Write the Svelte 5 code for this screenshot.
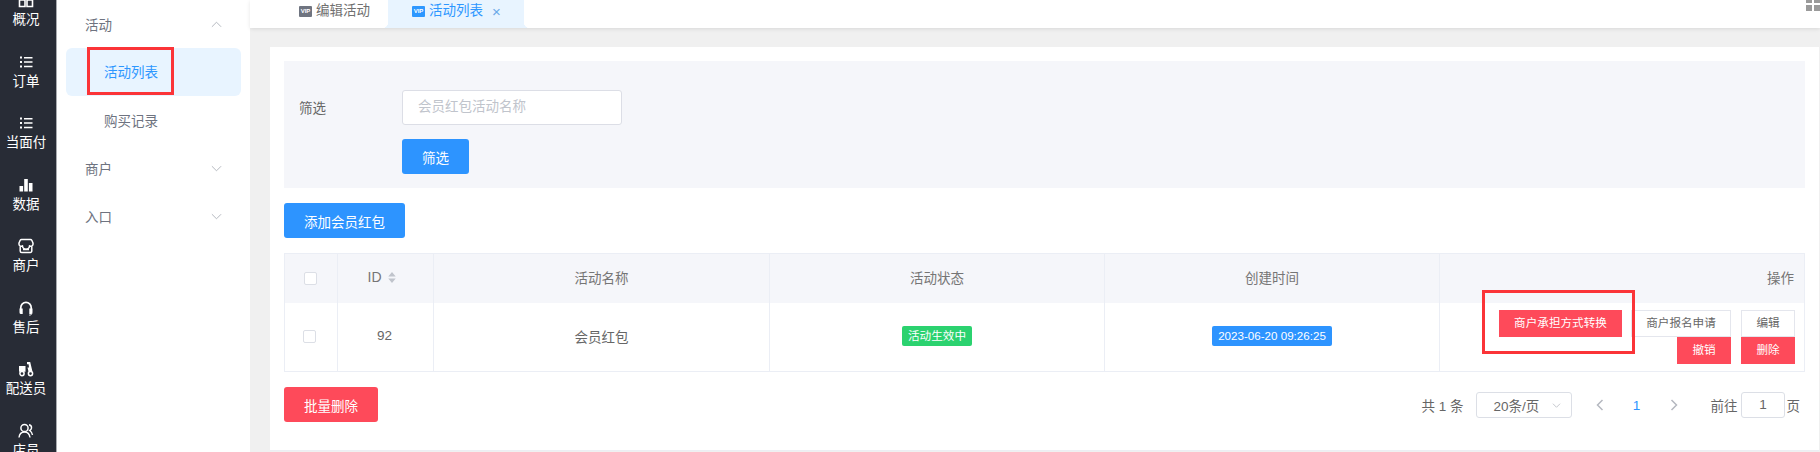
<script>
  const nav = [
    { label: '概况', icon: 'overview' },
    { label: '订单', icon: 'list' },
    { label: '当面付', icon: 'list' },
    { label: '数据', icon: 'bars' },
    { label: '商户', icon: 'store' },
    { label: '售后', icon: 'headset' },
    { label: '配送员', icon: 'scooter' },
    { label: '店员', icon: 'people' }
  ];
</script>

<div class="page">
  <aside class="rail">
    <nav class="rail-nav">
      {#each nav as item}
        <div class="rail-item">
          <svg class="rail-icon" viewBox="0 0 16 16" aria-hidden="true">
            {#if item.icon === 'overview'}
              <path d="M5 1.500h6v5H5z M1.500 8h5.500v6.500H1.500z M9 8h5.500v6.500H9z" fill="none" stroke="#fff" stroke-width="1.600" />
            {:else if item.icon === 'list'}
              <path d="M2 2.500h2v2H2z M2 7h2v2H2z M2 11.500h2v2H2z M6 3h8.500v1.400H6z M6 7.300h8.500v1.400H6z M6 11.800h8.500v1.400H6z" fill="#fff" />
            {:else if item.icon === 'bars'}
              <path d="M1.500 9h3.600v5.500H1.500z M6.200 2h3.600v12.500H6.200z M10.900 6h3.600v8.500h-3.600z" fill="#fff" />
            {:else if item.icon === 'store'}
              <path d="M3.500 1.500h9a1.500 1.500 0 0 1 1.300.8l1.200 2.700v1.200a2.100 2.100 0 0 1-3.500 1.500 2.800 2.800 0 0 1-7 0A2.100 2.100 0 0 1 1 6.200V5l1.200-2.700a1.500 1.500 0 0 1 1.300-.8z" fill="none" stroke="#fff" stroke-width="1.500" stroke-linejoin="round" />
              <path d="M2.200 8.500v4.500a1.500 1.500 0 0 0 1.500 1.500h8.600a1.500 1.500 0 0 0 1.500-1.500V8.500 M5 11.500h6" fill="none" stroke="#fff" stroke-width="1.500" />
            {:else if item.icon === 'headset'}
              <path d="M2.800 9V7.500a5.200 5.200 0 0 1 10.400 0V9" fill="none" stroke="#fff" stroke-width="1.700" />
              <path d="M1.500 8.500h3.200v5.500H3a1.500 1.500 0 0 1-1.500-1.500zM11.300 8.500h3.200v4A1.500 1.500 0 0 1 13 14h-1.700z" fill="#fff" />
              <path d="M13.800 13.500c0 1-1 1.600-2.600 1.600" fill="none" stroke="#fff" stroke-width="1" />
            {:else if item.icon === 'scooter'}
              <path d="M1 5h6.500v5.800H1z M9 1h3.200l2.300 9.800h-4l-1-4.300h1.500l-.4-3.200H9z" fill="#fff" />
              <circle cx="4" cy="12.600" r="2.100" fill="#282c36" stroke="#fff" stroke-width="1.500" />
              <circle cx="12.500" cy="12.600" r="2.100" fill="#282c36" stroke="#fff" stroke-width="1.500" />
            {:else}
              <circle cx="6.500" cy="5" r="3.600" fill="none" stroke="#fff" stroke-width="1.500" />
              <path d="M1 14.500c.4-3.500 2.600-5.500 5.500-5.500s5 2 5.500 5.500 M11 1.800c1.800.4 2.800 1.700 2.500 3.400-.2 1.100-.9 1.900-1.800 2.300 1.500 1 2.500 2.500 2.800 4.500" fill="none" stroke="#fff" stroke-width="1.400" />
            {/if}
          </svg>
          <span>{item.label}</span>
        </div>
      {/each}
    </nav>
  </aside>

  <aside class="menu">
    <div class="menu-group">
      <span>活动</span>
      <svg class="chev" viewBox="0 0 12 7"><path d="M1 6l5-5 5 5" /></svg>
    </div>
    <div class="menu-sub active">
      <span>活动列表</span>
      <i class="mark"></i>
    </div>
    <div class="menu-sub">购买记录</div>
    <div class="menu-group">
      <span>商户</span>
      <svg class="chev" viewBox="0 0 12 7"><path d="M1 1l5 5 5-5" /></svg>
    </div>
    <div class="menu-group">
      <span>入口</span>
      <svg class="chev" viewBox="0 0 12 7"><path d="M1 1l5 5 5-5" /></svg>
    </div>
  </aside>

  <main class="main">
    <header class="tabs">
      <div class="tab">
        <span class="vip">VIP</span>
        <span>编辑活动</span>
      </div>
      <div class="tab current">
        <span class="vip">VIP</span>
        <span>活动列表</span>
        <span class="close">×</span>
      </div>
      <div class="grid-icon"><i></i><i></i><i></i><i></i></div>
    </header>

    <section class="card">
      <div class="filter">
        <div class="filter-row">
          <span class="filter-label">筛选</span>
          <div class="fake-input">会员红包活动名称</div>
        </div>
        <button class="btn primary filter-btn">筛选</button>
      </div>

      <button class="btn primary add-btn">添加会员红包</button>

      <table class="table">
        <colgroup>
          <col class="c1" /><col class="c2" /><col class="c3" /><col class="c4" /><col class="c5" /><col class="c6" />
        </colgroup>
        <thead>
          <tr>
            <th><span class="check head-check"></span></th>
            <th>
              <span class="id-head">ID
                <svg viewBox="0 0 10 14" class="sort"><path d="M5 1l4 5H1z M5 13L1 8h8z" /></svg>
              </span>
            </th>
            <th>活动名称</th>
            <th>活动状态</th>
            <th>创建时间</th>
            <th class="right">操作</th>
          </tr>
        </thead>
        <tbody>
          <tr>
            <td><span class="check"></span></td>
            <td class="id">92</td>
            <td>会员红包</td>
            <td><span class="tag green">活动生效中</span></td>
            <td><span class="tag blue">2023-06-20 09:26:25</span></td>
            <td class="ops">
              <div class="ops-grid">
                <div class="ops-row">
                  <span class="mini red wide">商户承担方式转换<i class="mark big"></i></span>
                  <span class="mini plain apply">商户报名申请</span>
                  <span class="mini plain">编辑</span>
                </div>
                <div class="ops-row">
                  <span class="mini red">撤销</span>
                  <span class="mini red">删除</span>
                </div>
              </div>
            </td>
          </tr>
        </tbody>
      </table>

      <div class="footer">
        <button class="btn danger">批量删除</button>
        <div class="pager">
          <span class="total">共 1 条</span>
          <div class="size">
            <span>20条/页</span>
            <svg class="chev small" viewBox="0 0 12 7"><path d="M1 1l5 5 5-5" /></svg>
          </div>
          <svg class="arrow prev" viewBox="0 0 8 12"><path d="M6.500 1L1.500 6l5 5" /></svg>
          <span class="num">1</span>
          <svg class="arrow next" viewBox="0 0 8 12"><path d="M1.500 1l5 5-5 5" /></svg>
          <span class="goto">前往</span>
          <div class="page-input">1</div>
          <span class="unit">页</span>
        </div>
      </div>
    </section>
  </main>
</div>

<style>
  :global(body) {
    margin: 0;
  }
  .page {
    display: flex;
    width: 1820px;
    height: 452px;
    overflow: hidden;
    font-family: "Liberation Sans", "Noto Sans CJK SC", sans-serif;
    font-size: 13.5px;
    color: #666;
    background: #f0f0f0;
  }
  .rail {
    flex: none;
    width: 56px;
    background: #282c36;
    border-right: 1px solid #a9abb0;
    box-sizing: content-box;
  }
  .rail-nav {
    margin-top: -20px;
    padding-right: 4px;
  }
  .rail-item {
    height: 61.500px;
    box-sizing: border-box;
    padding-top: 12px;
    display: flex;
    flex-direction: column;
    align-items: center;
    color: #fff;
    font-size: 13.500px;
    line-height: 18px;
    white-space: nowrap;
  }
  .rail-icon {
    width: 16px;
    height: 16px;
    margin-bottom: 3px;
    flex: none;
  }
  .menu {
    flex: none;
    width: 193px;
    background: #fff;
    padding: 1px 9px 0;
    box-sizing: border-box;
    color: #6e7380;
  }
  .menu-group {
    height: 48px;
    box-sizing: border-box;
    display: flex;
    align-items: center;
    justify-content: space-between;
    padding: 0 19px 2px 19px;
  }
  .menu-sub {
    height: 48px;
    box-sizing: border-box;
    display: flex;
    align-items: center;
    padding: 0 0 2px 38px;
    position: relative;
  }
  .menu-group + .menu-sub {
    margin-top: -1px;
    margin-bottom: 1px;
  }
  .menu-sub.active {
    background: #e8f4ff;
    color: #2d97ff;
    border-radius: 6px;
  }
  .mark {
    position: absolute;
    border: 3px solid #fb3438;
    box-sizing: border-box;
    pointer-events: none;
  }
  .menu-sub .mark {
    left: 21px;
    top: -1px;
    width: 87px;
    height: 48px;
  }
  .chev {
    width: 11px;
    height: 7px;
    fill: none;
    stroke: #aeb2ba;
    stroke-width: 1;
  }
  .main {
    flex: 1;
    min-width: 0;
    display: flex;
    flex-direction: column;
  }
  .tabs {
    height: 28px;
    flex: none;
    background: #fff;
    box-shadow: 0 1px 4px rgba(0, 0, 0, 0.1);
    display: flex;
    align-items: stretch;
    padding-left: 49px;
    position: relative;
    line-height: 20px;
  }
  .tab {
    display: flex;
    align-items: flex-start;
    padding-top: 1px;
    gap: 4px;
    color: #707070;
    width: 89px;
    white-space: nowrap;
  }
  .tab .vip {
    margin-top: 5px;
  }
  .tab.current {
    width: 136px;
    box-sizing: border-box;
    padding-left: 24px;
    background: #e8f4ff;
    color: #2d97ff;
    position: relative;
  }
  .tab.current::before,
  .tab.current::after {
    content: "";
    position: absolute;
    bottom: 0;
    width: 6px;
    height: 6px;
  }
  .tab.current::before {
    left: -6px;
    background: radial-gradient(circle at 0 0, transparent 6px, #e8f4ff 6.500px);
  }
  .tab.current::after {
    right: -6px;
    background: radial-gradient(circle at 100% 0, transparent 6px, #e8f4ff 6.500px);
  }
  .vip {
    display: inline-block;
    width: 13px;
    height: 11px;
    background: #6f7480;
    color: #fff;
    font-size: 6px;
    line-height: 11px;
    font-weight: 700;
    text-align: center;
    border-radius: 1px;
    overflow: hidden;
  }
  .current .vip {
    background: #2d97ff;
  }
  .close {
    font-size: 15px;
    margin-left: 5px;
    color: #6aa9e8;
    line-height: 22px;
  }
  .grid-icon {
    position: absolute;
    right: 0;
    top: -3px;
    display: grid;
    grid-template-columns: 6px 6px;
    gap: 2px;
  }
  .grid-icon i {
    height: 6px;
    background: #9a9a9a;
  }
  .card {
    margin: 19px 1px 0 20px;
    height: 404px;
    flex: none;
    background: #fff;
    padding: 14px;
    box-sizing: border-box;
    border-bottom: 1px solid #eceef3;
    display: flex;
    flex-direction: column;
    align-items: flex-start;
  }
  .filter {
    align-self: stretch;
    height: 127px;
    box-sizing: border-box;
    background: #f5f6fa;
    padding: 29px 0 0 15px;
    flex: none;
  }
  .filter-row {
    display: flex;
    align-items: center;
    margin-bottom: 14px;
  }
  .filter-label {
    width: 103px;
    color: #666;
    margin-top: -2px;
  }
  .fake-input {
    width: 220px;
    height: 35px;
    box-sizing: border-box;
    background: #fff;
    border: 1px solid #dcdee6;
    border-radius: 3px;
    padding-left: 15px;
    line-height: 31px;
    color: #c0c4cc;
  }
  .btn {
    border: none;
    border-radius: 3px;
    color: #fff;
    font: inherit;
    height: 35px;
    padding: 0;
    display: block;
  }
  .primary {
    background: #2d94ff;
  }
  .danger {
    background: #fe4a5a;
    width: 94px;
  }
  .filter-btn {
    width: 67px;
    margin-left: 103px;
  }
  .add-btn {
    width: 121px;
    margin-top: 15px;
    margin-bottom: 15px;
    flex: none;
  }
  .table {
    align-self: stretch;
    width: 1521px;
    table-layout: fixed;
    border-collapse: collapse;
    border: 1px solid #ebeef5;
    flex: none;
    text-align: center;
  }
  .c1 { width: 53px; }
  .c2 { width: 96px; }
  .c3 { width: 336px; }
  .c4 { width: 335px; }
  .c5 { width: 335px; }
  th, td {
    padding: 0 0 2px;
    border-right: 1px solid #ebeef5;
  }
  th:last-child, td:last-child {
    border-right: none;
  }
  th {
    background: #f5f6fa;
    height: 49px;
    box-sizing: border-box;
    font-weight: 400;
    color: #757575;
  }
  td {
    height: 69px;
    box-sizing: border-box;
    color: #666;
  }
  .right {
    text-align: right;
    padding-right: 10px;
  }
  .check {
    display: inline-block;
    width: 13px;
    height: 13px;
    box-sizing: border-box;
    background: #fff;
    border: 1px solid #dcdfe6;
    border-radius: 2px;
    vertical-align: middle;
    margin-right: 4px;
  }
  .head-check {
    margin-right: 2px;
  }
  .id-head {
    display: inline-flex;
    align-items: center;
    gap: 5px;
    margin-right: 7px;
    font-size: 14px;
  }
  .sort {
    width: 10px;
    height: 13px;
    fill: #c0c4cc;
  }
  .id {
    padding-right: 2px;
  }
  .tag {
    display: inline-block;
    height: 20px;
    line-height: 20px;
    color: #fff;
    font-size: 11.600px;
    padding: 0 6px;
    border-radius: 2px;
    vertical-align: middle;
    white-space: nowrap;
  }
  .green {
    background: #2bd26f;
  }
  .blue {
    background: #2d94ff;
  }
  td.ops {
    padding: 0 9px 0 0;
  }
  .ops-grid {
    display: flex;
    flex-direction: column;
    align-items: flex-end;
  }
  .ops-row {
    display: flex;
    justify-content: flex-end;
    gap: 10px;
  }
  .mini {
    display: block;
    width: 54px;
    height: 27px;
    box-sizing: border-box;
    line-height: 26px;
    font-size: 11.600px;
    text-align: center;
    white-space: nowrap;
  }
  .mini.red {
    background: #fe4a5a;
    color: #fff;
  }
  .mini.plain {
    border: 1px solid #e4e6ed;
    line-height: 24px;
    color: #666;
  }
  .mini.apply {
    width: 100px;
  }
  .mini.wide {
    width: 123px;
    margin-right: -1px;
    position: relative;
  }
  .mark.big {
    left: -17px;
    top: -20px;
    width: 153px;
    height: 64px;
  }
  .footer {
    align-self: stretch;
    display: flex;
    align-items: center;
    justify-content: space-between;
    margin-top: 15px;
    padding-right: 5px;
    flex: none;
  }
  .footer .btn {
    flex: none;
  }
  .pager {
    display: flex;
    align-items: center;
    color: #666;
    margin-top: 1px;
    white-space: nowrap;
  }
  .total {
    width: 54px;
  }
  .size {
    width: 96px;
    height: 26px;
    box-sizing: border-box;
    border: 1px solid #dcdfe6;
    border-radius: 3px;
    display: flex;
    align-items: center;
    justify-content: space-between;
    padding: 0 10px 0 17px;
  }
  .chev.small {
    width: 9px;
    height: 5px;
  }
  .arrow {
    width: 8px;
    height: 12px;
    fill: none;
    stroke: #b5b8c0;
    stroke-width: 1.500;
    flex: none;
  }
  .prev {
    margin-left: 24px;
  }
  .num {
    margin-left: 29px;
    width: 8px;
    color: #2d94ff;
    text-align: center;
  }
  .next {
    margin-left: 29px;
  }
  .goto {
    margin-left: 33px;
    width: 30.500px;
  }
  .page-input {
    width: 44px;
    height: 26px;
    box-sizing: border-box;
    border: 1px solid #dcdfe6;
    border-radius: 3px;
    line-height: 24px;
    text-align: center;
  }
  .unit {
    margin-left: 1.500px;
  }
</style>
